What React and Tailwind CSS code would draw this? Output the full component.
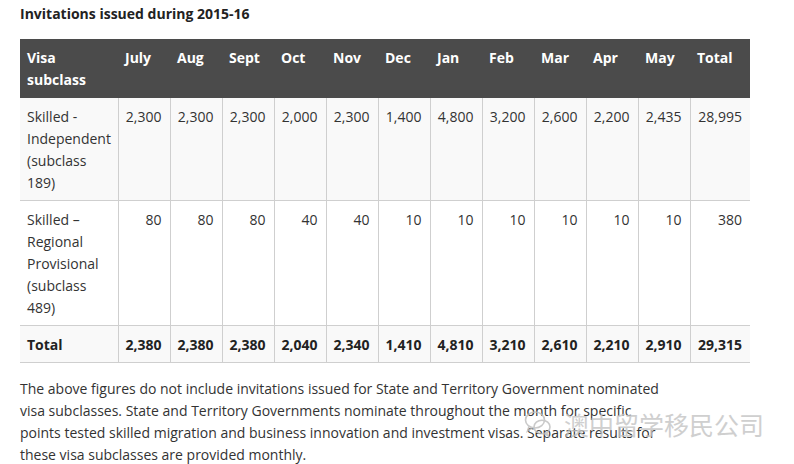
import React from 'react'

const months = ['July', 'Aug', 'Sept', 'Oct', 'Nov', 'Dec', 'Jan', 'Feb', 'Mar', 'Apr', 'May']

const rows = [
  {
    label: ['Skilled -', 'Independent', '(subclass', '189)'],
    values: ['2,300', '2,300', '2,300', '2,000', '2,300', '1,400', '4,800', '3,200', '2,600', '2,200', '2,435', '28,995'],
    bg: 'bg-[#f9f9f9]',
  },
  {
    label: ['Skilled –', 'Regional', 'Provisional', '(subclass', '489)'],
    values: ['80', '80', '80', '40', '40', '10', '10', '10', '10', '10', '10', '380'],
    bg: 'bg-white',
  },
]

const totals = ['2,380', '2,380', '2,380', '2,040', '2,340', '1,410', '4,810', '3,210', '2,610', '2,210', '2,910', '29,315']

const WeChatMark = () => (
  <svg width="28" height="30" viewBox="0 0 28 30" fill="none" stroke="#bdbdbd" strokeWidth="1.6">
    <ellipse cx="11" cy="11" rx="9.5" ry="8" />
    <path d="M5 17.5 L3.5 22 L8.5 18.6" />
    <ellipse cx="18" cy="18" rx="8" ry="6.8" />
    <path d="M22.5 23.6 L24.5 27 L20 24.4" />
  </svg>
)

const App = () => {
  return (
    <div className="relative w-[794px] h-[464px] overflow-hidden bg-white font-['Open_Sans',sans-serif] text-[14px] leading-[22px] text-[#333]">
      <div className="px-5 pt-[3px]">
        <h2 className="font-bold text-[#222] text-[14px] leading-[22px]">Invitations issued during 2015-16</h2>

        <table className="mt-[14px] w-[730px] table-fixed border-collapse">
          <colgroup>
            <col className="w-[98px]" />
            {months.map(m => <col key={m} className="w-[52px]" />)}
            <col className="w-[60px]" />
          </colgroup>
          <thead>
            <tr className="bg-[#4b4b4b] text-white">
              <th className="text-left align-top font-bold px-[7px] pt-[8px] pb-[7px]">Visa<br />subclass</th>
              {months.map(m => (
                <th key={m} className="text-left align-top font-bold px-[7px] pt-[8px] pb-[7px]">{m}</th>
              ))}
              <th className="text-left align-top font-bold px-[7px] pt-[8px] pb-[7px]">Total</th>
            </tr>
          </thead>
          <tbody>
            {rows.map((r, i) => (
              <tr key={i} className={`${r.bg} border-b border-[#cfcfcf]`}>
                <td className="align-top pl-[7px] pr-1 pt-[8px] pb-[6px]">
                  {r.label.map((l, j) => <div key={j} className="whitespace-nowrap">{l}</div>)}
                </td>
                {r.values.map((v, j) => (
                  <td key={j} className="align-top text-right border-l border-[#cfcfcf] pr-[8px] pl-0 pt-[8px] pb-[6px]">{v}</td>
                ))}
              </tr>
            ))}
            <tr className="bg-[#f9f9f9] border-b border-[#cfcfcf] font-bold text-[#222]">
              <td className="align-top pl-[7px] pt-[8px] pb-[6px]">Total</td>
              {totals.map((v, j) => (
                <td key={j} className="align-top text-right border-l border-[#cfcfcf] pr-[8px] pl-0 pt-[8px] pb-[6px]">{v}</td>
              ))}
            </tr>
          </tbody>
        </table>

        <p className="mt-[15px] w-[650px]">
          The above figures do not include invitations issued for State and Territory Government nominated visa subclasses. State and Territory Governments nominate throughout the month for specific points tested skilled migration and business innovation and investment visas. Separate results for these visa subclasses are provided monthly.
        </p>
      </div>

      {/* watermark */}
      <div className="absolute left-[524px] top-[409px] flex items-center gap-[12px] opacity-80">
        <WeChatMark />
        <span className="text-[25px] leading-[28px] text-[#c4c4c4] tracking-[0px] font-['Noto_Sans_CJK_SC',sans-serif]">澳中留学移民公司</span>
      </div>
    </div>
  )
}

export default App
